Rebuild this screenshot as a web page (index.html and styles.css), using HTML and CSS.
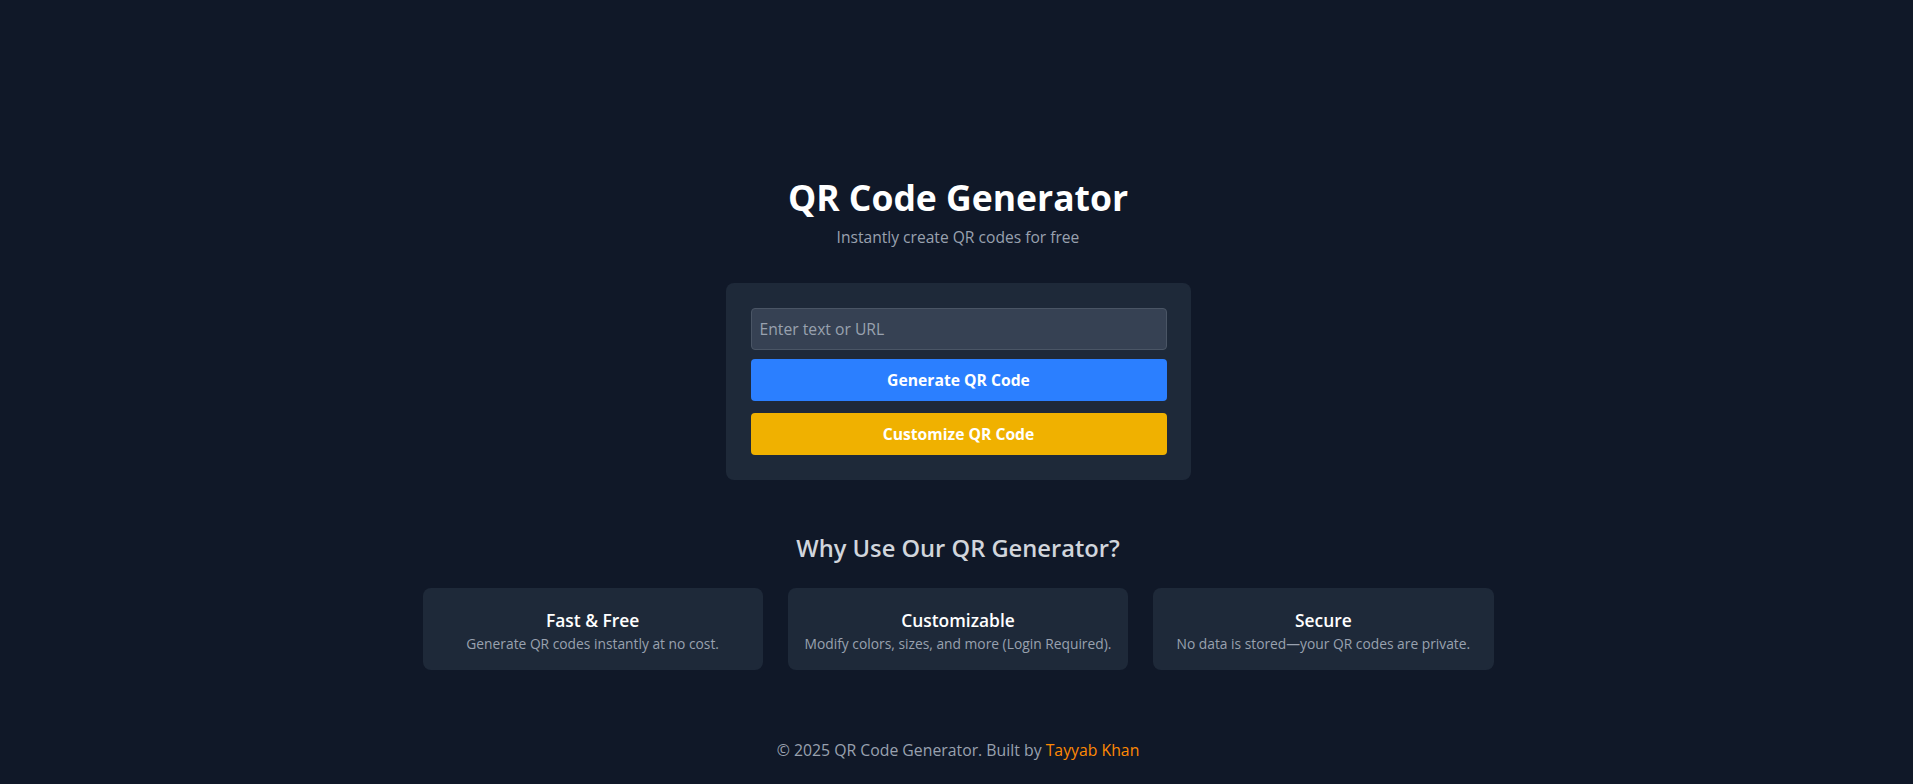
FILE: index.html
```html
<!DOCTYPE html>
<html lang="en">
<head>
<meta charset="utf-8">
<title>QR Code Generator</title>
<link rel="stylesheet" href="styles.css">
</head>
<body>
<div class="page">
  <header class="hero">
    <h1 class="title">QR Code Generator</h1>
    <p class="subtitle">Instantly create QR codes for free</p>
  </header>

  <section class="panel">
    <input class="text-input" type="text" placeholder="Enter text or URL">
    <button class="btn btn-blue">Generate QR Code</button>
    <button class="btn btn-yellow">Customize QR Code</button>
  </section>

  <section class="why">
    <h2 class="why-title">Why Use Our QR Generator?</h2>
    <div class="features">
      <div class="feature">
        <h3 class="feature-title">Fast &amp; Free</h3>
        <p class="feature-desc">Generate QR codes instantly at no cost.</p>
      </div>
      <div class="feature">
        <h3 class="feature-title">Customizable</h3>
        <p class="feature-desc">Modify colors, sizes, and more (Login Required).</p>
      </div>
      <div class="feature">
        <h3 class="feature-title">Secure</h3>
        <p class="feature-desc">No data is stored—your QR codes are private.</p>
      </div>
    </div>
  </section>

  <footer class="footer">
    © 2025 QR Code Generator. Built by <a class="author" href="#">Tayyab Khan</a>
  </footer>
</div>
</body>
</html>
```
FILE: styles.css
```css
* { box-sizing: border-box; }
html, body { margin: 0; padding: 0; }
body {
  background: #101828;
  font-family: "Open Sans", "Noto Sans", sans-serif;
  color: #ffffff;
  min-height: 100vh;
}
.page {
  display: flex;
  flex-direction: column;
  align-items: center;
  padding: 177px 0 0 3px;
}
.hero { text-align: center; }
.title {
  margin: 0;
  font-size: 35.5px;
  line-height: 40px;
  font-weight: 700;
  color: #ffffff;
}
.subtitle {
  margin: 8px 0 0;
  font-size: 15.6px;
  line-height: 24px;
  color: #99a1af;
}
.panel {
  margin-top: 34px;
  width: 465px;
  background: #1e2939;
  border-radius: 8px;
  padding: 25px 24px 25px 25px;
  display: flex;
  flex-direction: column;
}
.text-input {
  height: 42px;
  width: 100%;
  background: #364153;
  border: 1px solid #4a5565;
  border-radius: 4px;
  padding: 0 8px;
  font-family: inherit;
  font-size: 15.7px;
  color: #ffffff;
  outline: none;
}
.text-input::placeholder { color: #99a1af; }
.btn {
  height: 42px;
  width: 100%;
  border: 0;
  border-radius: 4px;
  font-family: inherit;
  font-size: 15.7px;
  font-weight: 700;
  color: #ffffff;
  cursor: pointer;
}
.btn-blue { margin-top: 9px; background: #2b7fff; }
.btn-yellow { margin-top: 12px; background: #f0b100; }

.why {
  margin-top: 52px;
  display: flex;
  flex-direction: column;
  align-items: center;
}
.why-title {
  margin: 0;
  font-size: 23.7px;
  line-height: 32px;
  font-weight: 600;
  color: #d1d5dc;
}
.features {
  margin-top: 24px;
  width: 1071px;
  display: grid;
  grid-template-columns: repeat(3, 1fr);
  gap: 25px;
}
.feature {
  background: #1e2939;
  border-radius: 8px;
  padding: 18px 12px 16px;
  text-align: center;
}
.feature-title {
  margin: 0;
  font-size: 17.4px;
  line-height: 28px;
  font-weight: 600;
  color: #ffffff;
}
.feature-desc {
  margin: 0;
  font-size: 13.8px;
  line-height: 20px;
  color: #99a1af;
}
.footer {
  margin-top: 68px;
  font-size: 15.8px;
  line-height: 24px;
  color: #99a1af;
  text-align: center;
}
.author {
  color: #ff8904;
  text-decoration: none;
}
```
